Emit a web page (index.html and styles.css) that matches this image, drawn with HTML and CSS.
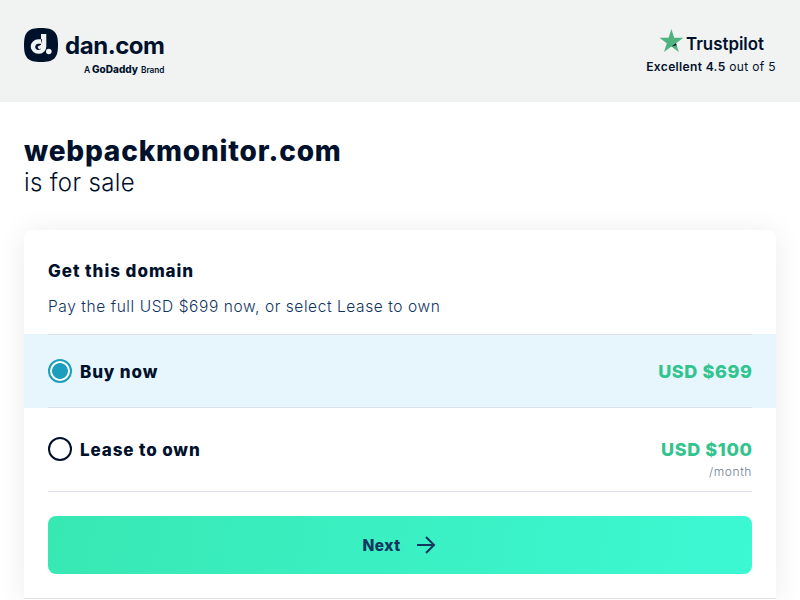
FILE: index.html
```html
<!DOCTYPE html>
<html lang="en">
<head>
<meta charset="utf-8">
<title>webpackmonitor.com is for sale</title>
<link rel="stylesheet" href="styles.css">
</head>
<body>
<header class="header">
  <svg class="brand" width="142" height="52" viewBox="0 0 142 52" role="img" aria-label="dan.com, a GoDaddy brand">
    <path class="ink" d="M17 0C30 0 34 4 34 17S30 34 17 34 0 30 0 17 4 0 17 0Z"/>
    <path class="paper" d="M17 6h5.300v13A7.800 7.300 0 1 1 14.300 11.200H17z"/>
    <path class="ink" d="M17 11.200h1.200l-1.200 4.500h-2.500a3.200 3.200 0 1 0 2.500 5z"/>
    <path class="paper" d="M13.500 18.800l3.500-2v3.800l-2 .8z"/>
    <circle class="paper" cx="24.800" cy="23.500" r="2.800"/>
    <text class="brand-name" x="41" y="25.500" textLength="100">dan.com</text>
    <text class="brand-small" x="60" y="45" textLength="5.500">A</text>
    <text class="brand-parent" x="68" y="45" textLength="46" lengthAdjust="spacingAndGlyphs">GoDaddy</text>
    <text class="brand-small" x="117" y="45" textLength="23.500" lengthAdjust="spacingAndGlyphs">Brand</text>
  </svg>
  <div class="rating">
    <svg class="trustpilot" width="112" height="28" viewBox="0 0 112 28" role="img" aria-label="Trustpilot">
      <path class="star" d="M12.400 1l2.800 8.800h9.200l-7.400 5.500 2.800 8.700-7.400-5.400L5 24l2.800-8.700L.4 9.800h9.200z"/>
      <path class="ink" d="M17.700 17.300l-.7-2-4.600 3.300z"/>
      <text class="trust-name" x="27" y="22" textLength="78" lengthAdjust="spacingAndGlyphs">Trustpilot</text>
    </svg>
    <p class="score"><b>Excellent 4.5</b> out of 5</p>
  </div>
</header>
<main class="main">
  <h1 class="domain">webpackmonitor.com</h1>
  <p class="sale">is for sale</p>
  <section class="card">
    <div class="intro">
      <h2 class="title">Get this domain</h2>
      <p class="hint">Pay the full USD $699 now, or select Lease to own</p>
    </div>
    <label class="option selected">
      <span class="row">
        <input class="radio" type="radio" name="plan" checked>
        <span class="label">Buy now</span>
        <span class="price">USD $699</span>
      </span>
    </label>
    <label class="option lease">
      <span class="row">
        <input class="radio" type="radio" name="plan">
        <span class="label">Lease to own</span>
        <span class="price">USD $100</span>
      </span>
      <span class="period">/month</span>
    </label>
    <div class="action">
      <button class="next" type="button">
        <span class="next-text">Next</span>
        <svg width="20" height="18" viewBox="0 0 20 18" aria-hidden="true"><path class="arrow" d="M1 9h17M10 1l8 8-8 8"/></svg>
      </button>
    </div>
    <div class="more"></div>
  </section>
</main>
</body>
</html>
```
FILE: styles.css
```css
* { box-sizing: border-box; margin: 0; padding: 0; }
body {
  background: #fff;
  color: #00112c;
  font-family: Inter, "Open Sans", sans-serif;
}
.header {
  display: flex;
  justify-content: space-between;
  align-items: flex-start;
  height: 102px;
  padding: 28px 24px 0;
  background: #f0f3f2;
}
.ink { fill: #00112c; }
.paper { fill: #f0f3f2; }
.brand-name { font-size: 24px; font-weight: 700; fill: #00112c; }
.brand-small { font-size: 8.5px; font-weight: 600; fill: #00112c; }
.brand-parent { font-size: 10px; font-weight: 800; fill: #00112c; }
.rating { display: flex; flex-direction: column; align-items: flex-end; }
.trustpilot { margin-right: 5px; }
.star { fill: #4eb37f; }
.trust-name { font-size: 17.5px; font-weight: 600; fill: #00112c; }
.score { margin-top: 3px; font-size: 12px; line-height: 16px; letter-spacing: .35px; white-space: nowrap; }
.score b { font-weight: 600; }
.main { height: 498px; padding: 32px 24px 0; overflow: hidden; }
.domain { font-size: 28px; line-height: 34px; font-weight: 800; letter-spacing: .81px; }
.sale { padding-top: 1px; font-size: 24px; line-height: 28px; font-weight: 300; letter-spacing: .36px; }
.card {
  margin-top: 33px;
  height: 370px;
  background: #fff;
  border-radius: 8px 8px 0 0;
  box-shadow: 0 2px 30px rgba(0, 0, 0, .08);
}
.intro { height: 104px; padding: 29px 24px 0; }
.title { font-size: 17px; line-height: 24px; font-weight: 800; letter-spacing: .97px; }
.hint { margin-top: 14px; font-size: 15.5px; line-height: 20px; font-weight: 300; letter-spacing: .58px; color: #0f3460; }
.option { display: block; padding: 0 24px; background: linear-gradient(#dedfe8, #dedfe8) 24px 100% / calc(100% - 48px) 1px no-repeat; }
.selected {
  height: 74px;
  padding-top: 25px;
  background:
    linear-gradient(#dae2e9, #dae2e9) 24px 0 / calc(100% - 48px) 1px no-repeat,
    linear-gradient(#dae2e9, #dae2e9) 24px 100% / calc(100% - 48px) 1px no-repeat,
    #e7f6fc;
}
.lease { height: 84px; padding-top: 29px; }
.row { display: flex; align-items: center; height: 24px; }
.radio {
  appearance: none;
  width: 24px;
  height: 24px;
  margin-right: 8px;
  border: 2px solid #00112c;
  border-radius: 50%;
  background: #fff;
}
.radio:checked { border-color: #1c9fbc; background: radial-gradient(circle, #1c9fbc 7.5px, #fff 8.3px); }
.label, .price { padding-top: 2px; font-size: 17px; line-height: 24px; font-weight: 800; letter-spacing: .88px; }
.price { margin-left: auto; margin-right: -.5px; font-size: 18px; letter-spacing: .6px; color: #32c48e; }
.period { display: block; margin-top: 3px; text-align: right; font-size: 12px; line-height: 16px; font-weight: 300; letter-spacing: .6px; color: #708090; }
.action { padding: 24px; }
.next {
  display: flex;
  justify-content: center;
  align-items: center;
  gap: 15px;
  width: 100%;
  height: 58px;
  padding-right: 2px;
  border: 0;
  border-radius: 8px;
  background: linear-gradient(100deg, #38e8b3, #3cf8d3);
  color: #11365f;
  font: 800 15.5px/20px Inter, sans-serif;
  letter-spacing: .5px;
}
.next-text { padding-top: 2px; }
.arrow { fill: none; stroke: #11365f; stroke-width: 2; }
.more { height: 1px; background: #dedfe8; }
```
